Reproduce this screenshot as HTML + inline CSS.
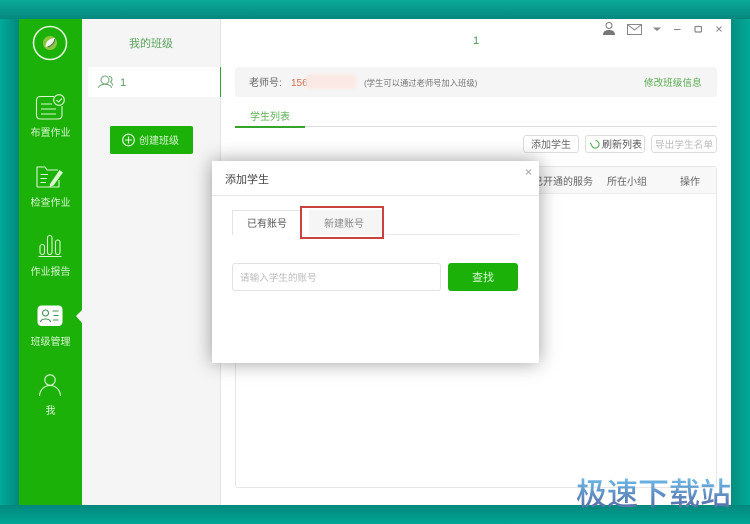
<!DOCTYPE html>
<html lang="zh"><head><meta charset="utf-8"><style>
html,body{margin:0;padding:0}
body{width:750px;height:524px;overflow:hidden;position:relative;background:#00a998;font-family:"Liberation Sans","Noto Sans CJK SC",sans-serif;font-size:10px}
div,span{position:absolute;box-sizing:border-box;white-space:nowrap}
svg{position:absolute;overflow:visible}
#wrap{left:0;top:0;width:750px;height:524px;filter:blur(.35px)}
.nav{color:#d8f5d0;font-size:10px;width:63px;text-align:center;left:19px;line-height:12px}
.btn{height:18px;border:1px solid #ddd;border-radius:3px;background:#fff;color:#666;font-size:10px;line-height:19px;text-align:center;top:135px}
</style></head><body><div id="wrap">
<div style="left:0;top:0;width:750px;height:19px;background:linear-gradient(#0aa999,#04877c)"></div>
<div style="left:0;top:505px;width:750px;height:19px;background:linear-gradient(#04877c,#00a796)"></div>
<div style="left:0;top:19px;width:19px;height:486px;background:linear-gradient(90deg,#00aa9a,#04887c)"></div>
<div style="left:731px;top:19px;width:19px;height:486px;background:linear-gradient(90deg,#048e80,#00a998)"></div>
<div style="left:19px;top:19px;width:712px;height:486px;background:#fff"></div>
<div style="left:19px;top:19px;width:63px;height:486px;background:#1cb109"></div>
<div style="left:82px;top:19px;width:138px;height:486px;background:#f5f5f5"></div>
<div style="left:220px;top:19px;width:1px;height:486px;background:#e4e4e4"></div>

<svg style="left:0;top:0" width="82" height="524" fill="none" stroke="#d8f7cc" stroke-width="1.1">
<circle cx="50" cy="43" r="16.5" stroke="#e4f8dc" stroke-width="1.6"/>
<circle cx="50" cy="43" r="7" fill="#8cc63f" stroke="none"/>
<path d="M45.500 47C45.500 41 50 38 55 38C54 43 50 46 45.500 47Z" fill="#f0f5ee" stroke="none"/>
<path d="M48 47C51 46 54 44 55 39" stroke="#5a7a6a" stroke-width="1.2"/>
<path d="M54 96.500H40.500Q36.500 96.500 36.500 100.500V115Q36.500 119 40.500 119H58Q62 119 62 115V106"/>
<path d="M41 104H52M41 109H56M41 114H56"/>
<circle cx="59" cy="100" r="5.300"/>
<path d="M56.500 100L58.500 102L62 98.500"/>
<path d="M37 187V167H45L47 170H58M37 187H59V180" stroke-linejoin="round"/>
<path d="M40.500 174.500H48M40.500 178.500H47M40.500 182.500H46"/>
<path d="M50 184L59.500 170L63 172.500L53.500 185.500L49.500 187Z" fill="#d8f7cc" stroke="none"/>
<rect x="40" y="244.500" width="4.500" height="10" rx="2.200"/>
<rect x="47.500" y="235.500" width="4.500" height="19" rx="2.200"/>
<rect x="55.500" y="240" width="4.500" height="14.500" rx="2.200"/>
<path d="M38.500 256.500H61.500"/>
<rect x="37.500" y="305.500" width="25" height="20.500" rx="4" fill="#fff" stroke="none"/>
<circle cx="45.500" cy="313" r="3" stroke="#3f8f50"/>
<path d="M40.500 322C41 318 50 318 50.500 322M52.500 311H58.500M53.500 315.500H58.500M53 320H58.500" stroke="#3f8f50"/>
<path d="M76 316L82 310V323Z" fill="#f5f5f5" stroke="none"/>
<circle cx="50" cy="380" r="5.200"/>
<path d="M39.500 396C40.500 382 59.500 382 60.500 396"/>
</svg>
<div class="nav" style="top:128px">布置作业</div>
<div class="nav" style="top:198px">检查作业</div>
<div class="nav" style="top:267px">作业报告</div>
<div class="nav" style="top:337px">班级管理</div>
<div class="nav" style="top:406px">我</div>

<div style="left:82px;top:37px;width:138px;text-align:center;font-size:11px;line-height:14px;color:#5ba45e">我的班级</div>
<div style="left:88px;top:67px;width:132px;height:30px;background:#fff"></div>
<div style="left:220px;top:67px;width:1px;height:30px;background:#2aa52a"></div>
<svg style="left:0;top:0" width="120" height="100" fill="none" stroke="#6fa578" stroke-width="1"><circle cx="105" cy="80" r="4"/><path d="M98.500 88C99 83 111 83 111.500 88M109 76.500C112 76.500 113 80 110.500 82C112 83 112.500 84 112.500 85.500"/></svg>
<div style="left:120px;top:76px;font-size:11px;line-height:14px;color:#5a9a60">1</div>

<div style="left:110px;top:126px;width:83px;height:28px;border-radius:2px;background:#1cb109"></div>
<svg style="left:0;top:0" width="140" height="150" fill="none" stroke="#e4f8dc" stroke-width="1.1"><circle cx="128.500" cy="140" r="5.800"/><path d="M125 140H132M128.500 136.500V143.500"/></svg>
<div style="left:139px;top:135px;font-size:10px;line-height:14px;color:#d8f5d0">创建班级</div>

<div style="left:473px;top:34px;font-size:11px;line-height:14px;color:#4a9a50">1</div>
<svg style="left:0;top:0" width="750" height="60" fill="none" stroke="#888" stroke-width="1">
<circle cx="609" cy="25.500" r="3" fill="#fff" stroke="#777"/>
<path d="M603 35C603 31 606 30 609 30C612 30 615 31 615 35Z" fill="#777" stroke="none"/>
<rect x="627.500" y="24.500" width="14" height="10"/>
<path d="M628 25L634.500 30L641 25"/>
<path d="M653 27.500H661L657 31Z" fill="#888" stroke="none"/>
<path d="M674 29.500H680.500"/>
<rect x="695" y="26.500" width="6.500" height="5.500" rx="1" stroke-width="1.2"/>
<path d="M716.500 26.500L721.500 31.500M721.500 26.500L716.500 31.500"/>
</svg>

<div style="left:235px;top:67px;width:482px;height:30px;border-radius:3px;background:#f5f5f5"></div>
<div style="left:249px;top:77px;font-size:10px;line-height:14px;color:#666">老师号:</div>
<div style="left:291px;top:77px;font-size:10px;line-height:14px;color:#d9694a">156</div>
<div style="left:306px;top:74px;width:50px;height:15px;border-radius:3px;background:#fbe9e6;filter:blur(1px)"></div>
<div style="left:364px;top:77px;font-size:8.300px;line-height:13px;color:#777">(学生可以通过老师号加入班级)</div>
<div style="left:644px;top:77px;font-size:9.600px;line-height:13px;color:#56ad4e">修改班级信息</div>

<div style="left:250px;top:111px;font-size:10px;line-height:14px;color:#5bb052">学生列表</div>
<div style="left:235px;top:126px;width:482px;height:1px;background:#ddd"></div>
<div style="left:235px;top:126px;width:70px;height:2px;background:#36a32a"></div>

<div class="btn" style="left:523px;width:56px">添加学生</div>
<div class="btn" style="left:585px;width:60px;padding-left:16px;color:#555;text-align:left">刷新列表</div>
<svg style="left:0;top:0" width="600" height="150" fill="none" stroke="#45a845" stroke-width="1"><path d="M591.500 144.500A3.800 3.800 0 1 0 595.500 140.500M591.500 144.500L590 143"/></svg>
<div class="btn" style="left:651px;width:66px;color:#bbb;font-size:9.700px">导出学生名单</div>

<div style="left:235px;top:166px;width:482px;height:322px;border:1px solid #e6e6e6;border-radius:3px;background:#fff"></div>
<div style="left:236px;top:167px;width:480px;height:27px;background:#f8f8f8;border-bottom:1px solid #ececec"></div>
<div style="left:533px;top:176px;font-size:10px;line-height:14px;color:#666">已开通的服务</div>
<div style="left:607px;top:176px;font-size:10px;line-height:14px;color:#666">所在小组</div>
<div style="left:680px;top:176px;font-size:10px;line-height:14px;color:#666">操作</div>

<div style="left:212px;top:161px;width:327px;height:202px;background:#fff;box-shadow:0 0 18px rgba(0,0,0,.38)"></div>
<div style="left:225px;top:172px;font-size:11px;line-height:16px;color:#444">添加学生</div>
<div style="left:212px;top:195px;width:327px;height:1px;background:#e8e8e8"></div>
<svg style="left:0;top:0" width="540" height="180" fill="none" stroke="#aaa" stroke-width="1"><path d="M526 169.500L531 174.500M531 169.500L526 174.500"/></svg>

<div style="left:232px;top:210px;width:69px;height:25px;border:1px solid #e4e4e4;border-bottom:none;background:#fff"></div>
<div style="left:247px;top:218px;font-size:10px;line-height:14px;color:#555">已有账号</div>
<div style="left:309px;top:210px;width:74px;height:25px;background:#f5f5f5"></div>
<div style="left:385px;top:234px;width:134px;height:1px;background:#e8e8e8"></div>
<div style="left:300px;top:206px;width:84px;height:33px;border:2px solid #c9433f"></div>
<div style="left:324px;top:218px;font-size:10px;line-height:14px;color:#888">新建账号</div>

<div style="left:232px;top:263px;width:209px;height:28px;border:1px solid #e2e2e2;border-radius:3px;background:#fff"></div>
<div style="left:240px;top:272px;font-size:9.600px;line-height:14px;color:#bbb">请输入学生的账号</div>
<div style="left:448px;top:263px;width:70px;height:28px;border-radius:3px;background:#1cb109;color:#d8f5d0;font-size:11px;line-height:30px;text-align:center">查找</div>

<div style="left:576px;top:472px;font-size:31px;line-height:40px;font-weight:500;color:#5f9fd0;background:linear-gradient(#6ab4e4 20%,#5a76ae 80%);-webkit-background-clip:text;background-clip:text;-webkit-text-fill-color:transparent;font-family:'Noto Sans CJK SC',sans-serif">极速下载站</div>
</div></body></html>
